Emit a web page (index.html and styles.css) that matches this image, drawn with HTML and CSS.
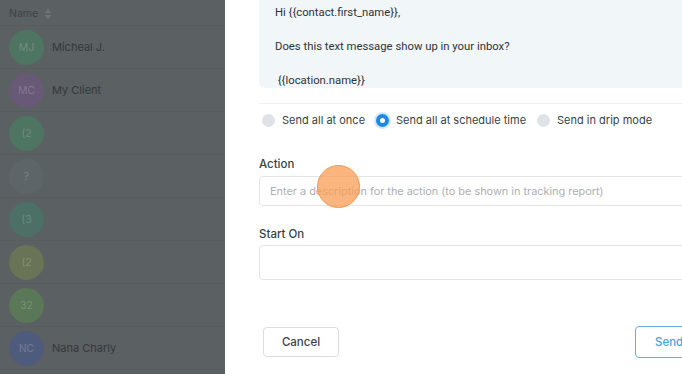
FILE: index.html
```html
<!DOCTYPE html>
<html lang="en">
<head>
  <meta charset="UTF-8" />
  <title>Bulk SMS</title>
  <link rel="stylesheet" href="styles.css">
</head>
<body>
  <div class="contacts">
    <div class="contacts-head">
      <span>Name</span>
      <svg class="sort" width="8" height="12" viewBox="0 0 8 12"><path d="M4 0.5 L7.5 5 H0.5 Z M4 11.5 L7.5 7 H0.5 Z" fill="currentColor"/></svg>
    </div>
    <div class="contact"><span class="avatar a-green">MJ</span><span class="name">Micheal J.</span></div>
    <div class="contact"><span class="avatar a-purple">MC</span><span class="name">My Client</span></div>
    <div class="contact"><span class="avatar a-green">(2</span></div>
    <div class="contact"><span class="avatar a-gray">?</span></div>
    <div class="contact"><span class="avatar a-teal">(3</span></div>
    <div class="contact"><span class="avatar a-olive">(2</span></div>
    <div class="contact"><span class="avatar a-moss">32</span></div>
    <div class="contact"><span class="avatar a-blue">NC</span><span class="name">Nana Charly</span></div>
  </div>

  <div class="drawer">
    <div class="message">
      <p>Hi {{contact.first_name}},</p>
      <p>Does this text message show up in your inbox?</p>
      <p>&nbsp;{{location.name}}</p>
    </div>

    <div class="radios">
      <label class="radio"><span class="dot"></span>Send all at once</label>
      <label class="radio checked"><span class="dot"></span>Send all at schedule time</label>
      <label class="radio"><span class="dot"></span>Send in drip mode</label>
    </div>

    <div class="field">
      <label class="field-label">Action</label>
      <input class="input" type="text" placeholder="Enter a description for the action (to be shown in tracking report)">
    </div>

    <div class="field">
      <label class="field-label">Start On</label>
      <input class="input tall" type="text">
    </div>

    <div class="actions">
      <button class="btn">Cancel</button>
      <button class="btn primary">Send</button>
    </div>

    <span class="cursor"></span>
  </div>
</body>
</html>
```

FILE: styles.css
```css
* {
  box-sizing: border-box;
}

body {
  margin: 0;
  width: 682px;
  height: 374px;
  overflow: hidden;
  display: flex;
  font-family: Inter, 'Noto Sans', sans-serif;
  background: #5b6062;
}

/* dimmed list behind the drawer */
.contacts {
  width: 225px;
  flex-shrink: 0;
  background: #5b6062;
  color: #34393b;
}

.contacts-head {
  height: 26px;
  padding: 2px 0 0 9px;
  display: flex;
  align-items: center;
  gap: 6px;
  font-size: 10.5px;
  color: #3f4446;
  border-bottom: 1px solid #575c5e;
}

.sort {
  color: #6c7173;
}

.contact {
  height: 43px;
  display: flex;
  align-items: center;
  padding-left: 9px;
  gap: 8px;
  border-bottom: 1px solid #575c5e;
}

.avatar {
  width: 35px;
  height: 35px;
  border-radius: 50%;
  display: flex;
  align-items: center;
  justify-content: center;
  font-size: 10.5px;
  color: rgba(255, 255, 255, 0.2);
}

.a-green { background: #4e7462; }
.a-purple { background: #685977; }
.a-gray { background: #5e6568; }
.a-teal { background: #4c7065; }
.a-olive { background: #687455; }
.a-moss { background: #5a7758; }
.a-blue { background: #4f5b7c; }

.name {
  font-size: 11px;
  color: #34393b;
}

/* drawer */
.drawer {
  position: relative;
  width: 520px;
  flex-shrink: 0;
  background: #fff;
  padding: 0 34px;
  color: #3a3f44;
}

.message {
  background: #f1f6f9;
  border-radius: 0 0 6px 6px;
  padding: 6px 16px 0;
  height: 88px;
  font-family: Roboto, 'Liberation Sans', sans-serif;
  font-size: 11.3px;
  line-height: 14px;
  color: #2f3337;
}

.message p {
  margin: 0 0 20px;
}

.radios {
  margin-top: 15px;
  border-top: 1px solid #eef0f2;
  padding-top: 8px;
  display: flex;
  gap: 8px;
  font-size: 11px;
  line-height: 16px;
  color: #3a3f44;
}

.radio {
  display: flex;
  align-items: center;
  gap: 7px;
  padding-left: 3px;
}

.dot {
  width: 13px;
  height: 13px;
  border-radius: 50%;
  background: #dfe2e7;
}

.radio.checked .dot {
  background: #fff;
  border: 4.5px solid #1e88e5;
  box-shadow: 0 0 0 2px #d3e7f8;
}

.field {
  display: flex;
  flex-direction: column;
}

.field-label {
  font-size: 11.5px;
  line-height: 14px;
  color: #3a3f44;
  font-weight: 500;
  margin-bottom: 5px;
}

.radios + .field {
  margin-top: 29px;
}

.field + .field {
  margin-top: 21px;
}

.field + .field .field-label {
  margin-bottom: 4px;
}

.input {
  height: 30px;
  border: 1px solid #e2e5e8;
  border-radius: 4px;
  padding: 0 10px;
  font-family: inherit;
  font-size: 10.9px;
  color: #3a3f44;
  outline: none;
}

.input::placeholder {
  color: #aab0b5;
}

.input.tall {
  height: 35px;
}

.actions {
  margin-top: 46px;
  padding: 0 4px;
  display: flex;
  justify-content: space-between;
  align-items: center;
}

.btn {
  width: 76px;
  height: 30px;
  background: #fff;
  border: 1px solid #d9dce0;
  border-radius: 4px;
  font-family: inherit;
  font-size: 11.5px;
  font-weight: 500;
  color: #3c4146;
}

.btn.primary {
  width: 72px;
  height: 32px;
  border: 1.5px solid #64ade6;
  color: #4a9fe0;
  text-align: left;
  padding-left: 19px;
}

/* click marker from the recording */
.cursor {
  position: absolute;
  left: 92px;
  top: 165px;
  width: 43px;
  height: 43px;
  border-radius: 50%;
  background: rgba(249, 158, 85, 0.75);
  border: 1.5px solid #f5964a;
}
```
